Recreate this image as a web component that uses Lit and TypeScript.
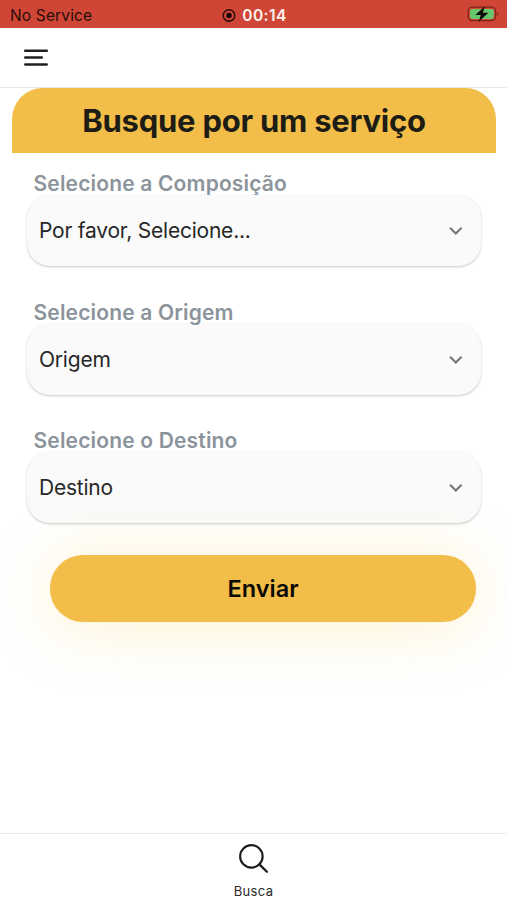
import { LitElement, html, css } from "lit";
import { customElement, property } from "lit/decorators.js";

@customElement("status-bar")
class StatusBar extends LitElement {
  static styles = css`
    :host {
      display: grid;
      grid-template-columns: 1fr auto 1fr;
      align-items: center;
      height: 28px;
      box-sizing: border-box;
      padding: 2px 8px 0 10px;
      background: #cf4636;
      color: #2a0d09;
      font-size: 15.5px;
      line-height: 20px;
    }
    .carrier { letter-spacing: 0.15px; padding-top: 1px; }
    .clock { display: flex; align-items: center; gap: 6px; color: #fff3ef; font-weight: 600; letter-spacing: 0.45px; padding-top: 1px; }
    .battery { justify-self: end; margin-top: -3px; }
    svg { display: block; }
  `;
  render() {
    return html`
      <span class="carrier">No Service</span>
      <span class="clock">
        <svg width="14" height="14" viewBox="0 0 14 14">
          <circle cx="7" cy="6.5" r="5.8" fill="none" stroke="#270b07" stroke-width="1.4" />
          <circle cx="7" cy="6.5" r="2.7" fill="#160504" />
        </svg>
        <span>00:14</span>
      </span>
      <svg class="battery" width="32" height="17" viewBox="0 0 32 17">
        <rect x="1.2" y="2.2" width="27.4" height="13.4" rx="4" fill="none" stroke="#7c241a" stroke-width="1.3" />
        <rect x="3" y="4" width="23.8" height="9.9" rx="2.3" fill="#67c76c" />
        <path d="M30 6.9c1.6.7 1.6 3.5 0 4.2z" fill="#7c241a" />
        <path d="M17.9 1.2 8.4 10.1h5.4L11.7 16.8 21.4 7.7h-5.6z" fill="#090b07" />
      </svg>
    `;
  }
}

@customElement("select-field")
class SelectField extends LitElement {
  @property() label = "";
  @property() value = "";
  static styles = css`
    :host { display: block; }
    .label {
      padding-left: 6.5px;
      height: 25px;
      line-height: 27px;
      font-size: 21px;
      font-weight: 600;
      letter-spacing: 0.17px;
      color: #8b949b;
      white-space: nowrap;
    }
    .box {
      display: flex;
      align-items: center;
      justify-content: space-between;
      box-sizing: border-box;
      height: 71px;
      padding: 1px 18px 0 12px;
      border-radius: 23px;
      background: #fafafa;
      box-shadow: 0 1px 2.5px rgba(0, 0, 0, 0.22);
      color: #272727;
      font-size: 21px;
      line-height: 28px;
      letter-spacing: -0.22px;
    }
    svg { display: block; }
  `;
  render() {
    return html`
      <div class="label"><span>${this.label}</span></div>
      <div class="box">
        <span>${this.value}</span>
        <svg width="14" height="10" viewBox="0 0 14 10">
          <path d="M1 1.8 6.8 7.5l5.8-5.7" fill="none" stroke="#777" stroke-width="2.1" />
        </svg>
      </div>
    `;
  }
}

const fields = [
  ["Selecione a Composição", "Por favor, Selecione..."],
  ["Selecione a Origem", "Origem"],
  ["Selecione o Destino", "Destino"],
];

@customElement("app-root")
class AppRoot extends LitElement {
  static styles = css`
    :host {
      display: flex;
      flex-direction: column;
      height: 900px;
      overflow: hidden;
      background: #fff;
      font-family: Inter, "Liberation Sans", sans-serif;
    }
    svg { display: block; }
    .header {
      display: flex;
      align-items: center;
      box-sizing: border-box;
      height: 60px;
      padding-left: 24px;
      border-bottom: 1px solid #e8e8e8;
    }
    main { flex: 1; display: flex; flex-direction: column; min-height: 0; }
    .title {
      margin: 0 11px 0 12px;
      height: 64.5px;
      line-height: 66px;
      border-radius: 31px 31px 0 0;
      background: #f2bd48;
      color: #1d1d15;
      text-align: center;
      font-size: 31px;
      font-weight: 700;
      letter-spacing: -0.24px;
      white-space: nowrap;
    }
    .fields { display: flex; flex-direction: column; gap: 32.7px; padding: 17.5px 26.5px 0 27px; }
    .send {
      display: block;
      margin: 32px 31px 0 50px;
      height: 67px;
      padding: 0;
      border: 0;
      border-radius: 33px;
      background: #f2bd48;
      box-shadow: 0 4px 66px rgba(250, 205, 70, 0.27);
      color: #0c0a04;
      font: 600 23.5px/67px Inter, "Liberation Sans", sans-serif;
    }
    .tabs {
      display: flex;
      flex-direction: column;
      align-items: center;
      box-sizing: border-box;
      height: 67px;
      padding-top: 10px;
      gap: 7px;
      border-top: 1px solid #ebebeb;
      color: #2b2b2b;
      font-size: 13px;
      line-height: 18px;
      letter-spacing: 0.35px;
    }
  `;
  render() {
    return html`
      <status-bar></status-bar>
      <div class="header">
        <svg width="24" height="18" viewBox="0 0 24 18">
          <path d="M1.2 1.8h21.6M1.2 8.6h16.6M1.2 15.4h21.6" stroke="#202124" stroke-width="2.5" stroke-linecap="round" />
        </svg>
      </div>
      <main>
        <div class="title"><span>Busque por um serviço</span></div>
        <div class="fields">
          ${fields.map(([l, v]) => html`<select-field .label=${l} .value=${v}></select-field>`)}
        </div>
        <button class="send">Enviar</button>
      </main>
      <div class="tabs">
        <svg width="32" height="32" viewBox="0 0 32 32">
          <circle cx="13.3" cy="12.8" r="11.6" fill="none" stroke="#1c1c1c" stroke-width="2.2" />
          <path d="m21.6 21 7.7 7.6" stroke="#1c1c1c" stroke-width="2.4" stroke-linecap="round" />
        </svg>
        <span>Busca</span>
      </div>
    `;
  }
}
